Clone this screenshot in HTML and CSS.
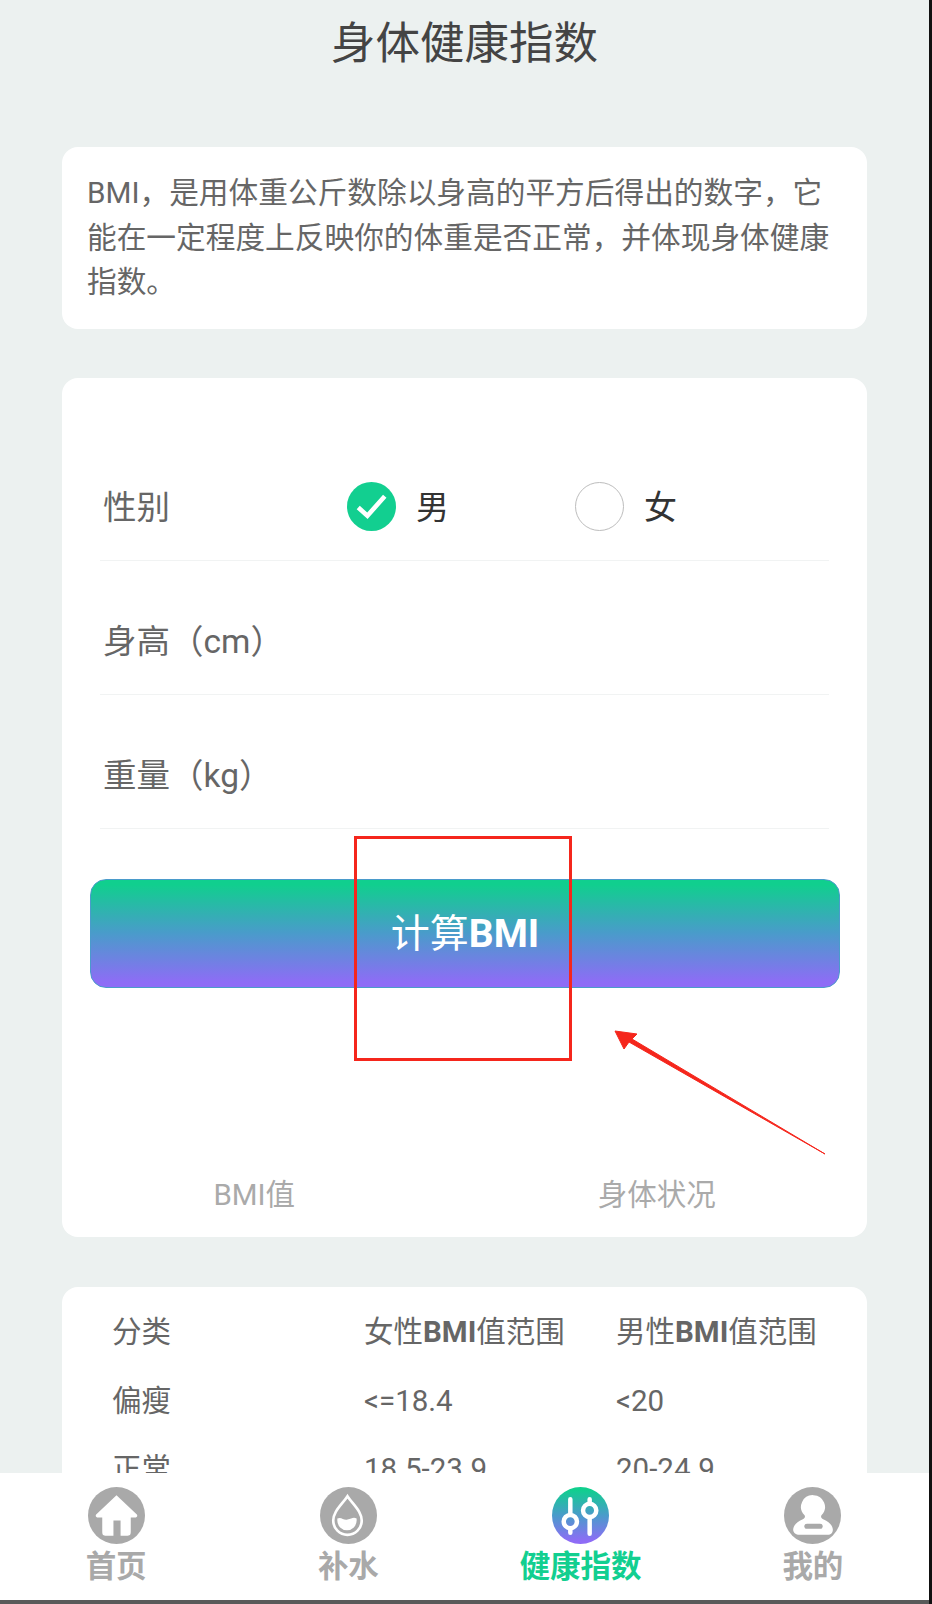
FILE: index.html
```html
<!DOCTYPE html>
<html lang="zh-CN">
<head>
  <meta charset="UTF-8">
  <title>身体健康指数</title>
  <link rel="stylesheet" href="styles.css">
</head>
<body>
  <div class="page">
    <h1 class="title">身体健康指数</h1>

    <div class="card intro">BMI，是用体重公斤数除以身高的平方后得出的数字，它能在一定程度上反映你的体重是否正常，并体现身体健康指数。</div>

    <div class="card calc">
      <div class="row">
        <span class="label">性别</span>
        <span class="choice choice-male">
          <svg class="radio" viewBox="0 0 48 48"><circle cx="24" cy="24" r="24" fill="#12cf90"/><path d="M11 25l9 8 17-19" fill="none" stroke="#fff" stroke-width="4.5"/></svg>
          男
        </span>
        <span class="choice choice-female">
          <span class="radio radio-empty"></span>
          女
        </span>
      </div>
      <div class="row"><span class="label">身高（cm）</span></div>
      <div class="row"><span class="label">重量（kg）</span></div>

      <button class="submit">计算<b>BMI</b></button>

      <div class="result">
        <span>BMI值</span>
        <span>身体状况</span>
      </div>
    </div>

    <div class="card ranges">
      <div class="range-row"><span>分类</span><span>女性<b>BMI</b>值范围</span><span>男性<b>BMI</b>值范围</span></div>
      <div class="range-row"><span>偏瘦</span><span>&lt;=18.4</span><span>&lt;20</span></div>
      <div class="range-row"><span>正常</span><span>18.5-23.9</span><span>20-24.9</span></div>
    </div>
  </div>

  <!-- annotation drawn over the screenshot -->
  <svg class="markup" viewBox="0 0 932 1604">
    <rect x="355.5" y="837.5" width="215" height="222" fill="none" stroke="#f5261c" stroke-width="3"/>
    <path d="M615 1031l22 3-5 5 193 115-196-112-5 7z" fill="#f5261c" stroke="#f5261c" stroke-linejoin="round"/>
  </svg>

  <nav class="tabbar">
    <div class="tab">
      <svg class="tab-icon" viewBox="0 0 56 56">
        <circle cx="28" cy="28" r="28" fill="#a9a9a9"/>
        <path d="M28 8L8 27c-1 1.500 0 3 2 3h4v14c0 3 1 4 4 4h7V33h7v15h6c3 0 4-1 4-4V30h4c2 0 3-1.500 2-3z" fill="#fff"/>
      </svg>
      <span>首页</span>
    </div>
    <div class="tab">
      <svg class="tab-icon" viewBox="0 0 56 56">
        <circle cx="28" cy="28" r="28" fill="#a9a9a9"/>
        <path d="M27 9C21 18 13 24 13 33a14 14 0 0 0 28 0C41 24 33 18 27 9z" fill="none" stroke="#fff" stroke-width="2.6"/>
        <path d="M17 31c4-2 6 2 10 1s6-3 9-1v2a9.500 9.500 0 0 1-19 0z" fill="#fff"/>
      </svg>
      <span>补水</span>
    </div>
    <div class="tab tab-active">
      <svg class="tab-icon" viewBox="0 0 56 56">
        <defs>
          <linearGradient id="tabGrad" x1="0" y1="0" x2="0" y2="1">
            <stop offset="0.05" stop-color="#10cf8e"/>
            <stop offset="0.5" stop-color="#4a9bcb"/>
            <stop offset="0.95" stop-color="#8e6cf6"/>
          </linearGradient>
        </defs>
        <circle cx="28" cy="28" r="28" fill="url(#tabGrad)"/>
        <path d="M18 12v15M18 41v4M37 12v4M37 30v16" stroke="#fff" stroke-width="4.4" stroke-linecap="round"/>
        <circle cx="18" cy="34" r="6.500" fill="none" stroke="#fff" stroke-width="4.4"/>
        <circle cx="37" cy="23" r="6.500" fill="none" stroke="#fff" stroke-width="4.4"/>
      </svg>
      <span>健康指数</span>
    </div>
    <div class="tab">
      <svg class="tab-icon" viewBox="0 0 56 56">
        <circle cx="28" cy="28" r="28" fill="#a9a9a9"/>
        <path d="M29 8a11.500 11.500 0 0 1 8 19.500c-1.500 2 0 3.500 2 4.500 5 2 9 6 9 10 0 3-2 5-5 5H15c-3 0-6-2-6-5 0-4 4-8 9-10 2-1 3.500-2.500 2-4.500A11.500 11.500 0 0 1 29 8z" fill="#fff"/>
        <rect x="20" y="36" width="18" height="5" rx="2.500" fill="#a9a9a9"/>
      </svg>
      <span>我的</span>
    </div>
  </nav>
</body>
</html>
```

FILE: styles.css
```css
html, body {
  margin: 0;
  height: 1604px;
  overflow: hidden;
  background: #111;
}
body {
  position: relative;
  font-family: "Roboto", "Noto Sans CJK SC", sans-serif;
  color: #666;
}
.page {
  width: 929px;
  height: 1473px;
  overflow: hidden;
  background: #ecf1f0;
}
.title {
  margin: 0;
  padding-top: 16px;
  height: 131px;
  box-sizing: border-box;
  text-align: center;
  font-size: 44.5px;
  line-height: 56px;
  font-weight: 400;
  color: #444;
}
.card {
  width: 805px;
  margin-left: 62px;
  background: #fff;
  border-radius: 16px;
  box-sizing: border-box;
}
.intro {
  height: 182px;
  margin-top: 16px;
  padding: 24px 25px 0;
  font-size: 29.7px;
  line-height: 44.5px;
}
.calc {
  height: 859px;
  margin-top: 49px;
  padding-top: 49px;
}
.row {
  display: flex;
  align-items: center;
  height: 134px;
  margin: 0 38px;
  padding-top: 22px;
  border-bottom: 1px solid #f1f3f3;
  box-sizing: border-box;
}
.label {
  margin-left: 3px;
  font-size: 33.5px;
}
.choice {
  display: flex;
  align-items: center;
  gap: 20px;
  font-size: 33px;
  color: #333;
}
.choice-male { margin-left: 177px; }
.choice-female { margin-left: 126px; }
.radio {
  display: block;
  width: 49px;
  height: 49px;
  margin-top: 3px;
  box-sizing: border-box;
}
.radio-empty {
  border: 1px solid #bdbdbd;
  border-radius: 50%;
}
.submit {
  display: block;
  width: 750px;
  height: 109px;
  margin: 50px 0 0 28px;
  padding: 0 0 8px;
  border: 1px solid #4a9bcb;
  border-radius: 16px;
  background: linear-gradient(#10cf8e 5%, #4a9bcb 50%, #8e6cf6 95%) border-box;
  color: #fff;
  font-family: inherit;
  font-size: 39px;
  font-weight: 400;
}
.submit b { font-weight: 700; }
.result {
  display: flex;
  margin: 183px 9px 0 -9px;
  font-size: 29.5px;
  color: #aaa;
}
.result span {
  width: 50%;
  text-align: center;
}
.ranges {
  height: 300px;
  margin-top: 50px;
  padding-top: 27px;
}
.range-row {
  display: grid;
  grid-template-columns: 252px 252px 1fr;
  height: 68.5px;
  padding-left: 50px;
  font-size: 29.5px;
  line-height: 36px;
}
.tabbar {
  position: absolute;
  left: 0;
  top: 1473px;
  width: 929px;
  height: 131px;
  display: grid;
  grid-template-columns: repeat(4, 1fr);
  border-bottom: 4px solid #5a5a5a;
  box-sizing: border-box;
  background: #fff;
}
.tab {
  display: flex;
  flex-direction: column;
  align-items: center;
  padding-top: 14px;
  font-size: 30.5px;
  line-height: 36px;
  font-weight: 700;
  color: #a9a9a9;
}
.tab-icon {
  display: block;
  width: 57px;
  height: 57px;
  margin-bottom: 5px;
}
.tab-active { color: #12cf90; }
.markup {
  position: absolute;
  left: 0;
  top: 0;
  width: 932px;
  height: 1604px;
  z-index: 2;
  pointer-events: none;
}
```
